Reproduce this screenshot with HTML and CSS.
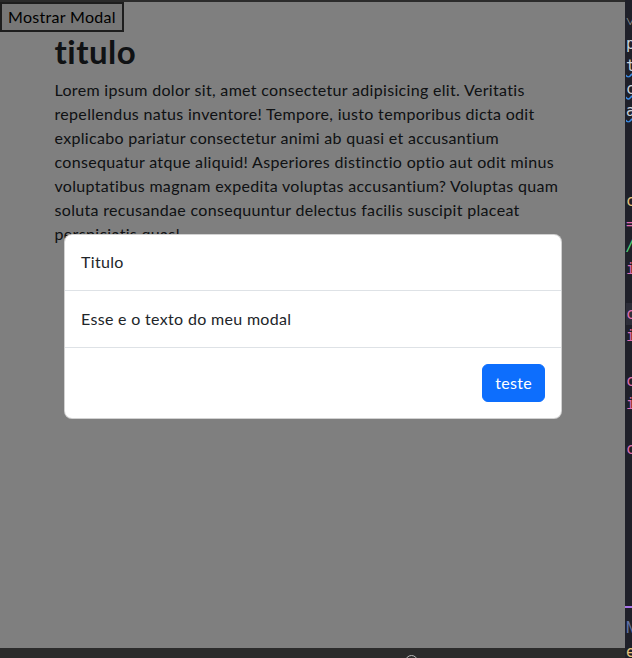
FILE: index.html
```html
<!DOCTYPE html>
<html lang="pt">
<head>
<meta charset="utf-8">
<title>Modal</title>
<link rel="stylesheet" href="styles.css">
</head>
<body>
<div class="frame">
  <div class="left">
    <div class="topbar"></div>
    <div class="viewport">
      <button class="show-btn">Mostrar Modal</button>
      <div class="container">
        <h1 class="title">titulo</h1>
        <p class="lorem">Lorem ipsum dolor sit, amet consectetur adipisicing elit. Veritatis repellendus natus inventore! Tempore, iusto temporibus dicta odit explicabo pariatur consectetur animi ab quasi et accusantium consequatur atque aliquid! Asperiores distinctio optio aut odit minus voluptatibus magnam expedita voluptas accusantium? Voluptas quam soluta recusandae consequuntur delectus facilis suscipit placeat perspiciatis quas!</p>
      </div>
      <div class="backdrop"></div>
      <div class="modal">
        <div class="modal-header">Titulo</div>
        <div class="modal-body">Esse e o texto do meu modal</div>
        <div class="modal-footer"><button class="btn-primary">teste</button></div>
      </div>
    </div>
    <div class="bottombar"><span class="dot"></span></div>
  </div>
  <div class="editor">
    <div class="code">
      <span class="c-gray">˅</span>
      <span class="c-white">p</span>
      <span class="c-white sq">t</span>
      <span class="c-white sq">c</span>
      <span class="c-white sq">a</span>
      <span></span>
      <span></span>
      <span></span>
      <span class="c-yellow">c</span>
      <span class="c-pink">=</span>
      <span class="c-green">/</span>
      <span class="c-pink">i</span>
      <span></span>
      <span class="c-pink hl">c</span>
      <span class="c-pink">i</span>
      <span></span>
      <span class="c-pink">c</span>
      <span class="c-pink">i</span>
      <span></span>
      <span class="c-pink">c</span>
    </div>
    <div class="purple-line"></div>
    <div class="code bottom">
      <span class="c-blue">N</span>
      <span class="c-yellow">e</span>
    </div>
  </div>
</div>
</body>
</html>
```
FILE: styles.css
```css
* { box-sizing: border-box; }
html, body { margin: 0; padding: 0; }
body {
  width: 632px;
  height: 658px;
  overflow: hidden;
  background: #2b2b2b;
  font-family: "Lato", "Noto Sans", sans-serif;
}
.frame { display: flex; height: 658px; }
.left {
  width: 625px;
  flex: none;
  display: flex;
  flex-direction: column;
}
.topbar { height: 2px; background: #2b2b2b; }
.viewport {
  position: relative;
  height: 646px;
  background: #fff;
  overflow: hidden;
  color: #212529;
  font-size: 16px;
  line-height: 24px;
  letter-spacing: 0.32px;
}
.show-btn {
  display: block;
  font-family: inherit;
  font-size: 16px;
  line-height: 24px;
  letter-spacing: 0.3px;
  color: #000;
  background: #efefef;
  border: 2px solid #3c3c3c;
  padding: 1px 6px;
  margin: 0;
  height: 30px;
}
.container {
  width: 540px;
  margin: 0 auto;
  padding: 0 12px;
}
.title {
  margin: 0 0 8px;
  font-size: 33px;
  line-height: 38px;
  font-weight: 700;
  letter-spacing: 0.5px;
}
.lorem { margin: 0; }
.backdrop {
  position: absolute;
  inset: 0;
  background: rgba(0, 0, 0, 0.5);
}
.modal {
  position: absolute;
  left: 64px;
  top: 232px;
  width: 498px;
  background: #fff;
  border: 1px solid rgba(0, 0, 0, 0.18);
  border-radius: 8px;
  color: #212529;
}
.modal-header {
  padding: 15px 16px 16px;
  border-bottom: 1px solid #dee2e6;
}
.modal-body {
  padding: 16px;
  border-bottom: 1px solid #dee2e6;
}
.modal-footer {
  display: flex;
  justify-content: flex-end;
  padding: 12px;
}
.btn-primary {
  margin: 4px;
  font-family: inherit;
  font-size: 16px;
  line-height: 24px;
  letter-spacing: 0.3px;
  padding: 6px 12px;
  color: #fff;
  background: #0d6efd;
  border: 1px solid #0d6efd;
  border-radius: 6px;
}
.bottombar {
  height: 10px;
  background: #2b2b2b;
  position: relative;
  overflow: hidden;
}
.dot {
  position: absolute;
  left: 405px;
  top: 7px;
  width: 13px;
  height: 13px;
  border: 1px solid #bbb;
  border-radius: 50%;
}
.editor {
  flex: 1;
  background: #1f2029;
  overflow: hidden;
  display: flex;
  flex-direction: column;
}
.code {
  display: flex;
  flex-direction: column;
  padding-top: 10px;
  font-family: "DejaVu Sans Mono", monospace;
  font-size: 15px;
  line-height: 22.5px;
  padding-left: 1px;
}
.code span { height: 22.5px; display: block; white-space: pre; }
.sq { text-decoration: underline wavy #3b8eea; }
.hl { background: #2c2d38; }
.c-gray { color: #9aa0a6; }
.c-white { color: #c9d1d9; }
.c-yellow { color: #e5c07b; }
.c-pink { color: #e06cae; }
.c-green { color: #50d27a; font-style: italic; }
.c-blue { color: #6272a4; }
.purple-line {
  margin-top: auto;
  height: 2px;
  flex: none;
  background: #a974e8;
  margin-bottom: 8px;
}
.code.bottom {
  padding-top: 0;
  line-height: 24px;
  height: 42px;
  flex: none;
  overflow: hidden;
}
.code.bottom span { height: 24px; flex: none; }
```
